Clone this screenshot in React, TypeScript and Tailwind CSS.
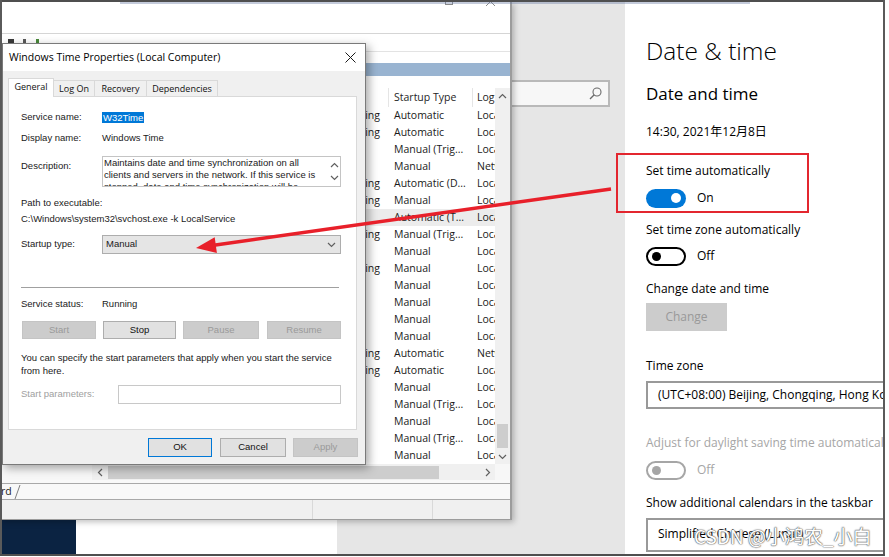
import React from "react";

const seg = "font-['Open_Sans','Noto_Sans_CJK_SC',sans-serif]";
const ms = "font-['Liberation_Sans',Arial,sans-serif]";

type Row = { st: string; type: string; log: string };

const rows: Row[] = [
  { st: "Running", type: "Automatic", log: "Local Service" },
  { st: "Running", type: "Automatic", log: "Local Service" },
  { st: "", type: "Manual (Trig...", log: "Local System" },
  { st: "", type: "Manual", log: "Network Service" },
  { st: "Running", type: "Automatic (D...", log: "Local System" },
  { st: "Running", type: "Manual", log: "Local System" },
  { st: "", type: "Automatic (T...", log: "Local System" },
  { st: "Running", type: "Manual (Trig...", log: "Local Service" },
  { st: "", type: "Manual", log: "Local System" },
  { st: "Running", type: "Manual", log: "Local System" },
  { st: "", type: "Manual", log: "Local System" },
  { st: "", type: "Manual", log: "Local System" },
  { st: "", type: "Manual", log: "Local System" },
  { st: "", type: "Manual", log: "Local System" },
  { st: "Running", type: "Automatic", log: "Network Service" },
  { st: "Running", type: "Automatic", log: "Local System" },
  { st: "", type: "Manual", log: "Local System" },
  { st: "", type: "Manual (Trig...", log: "Local System" },
  { st: "", type: "Manual", log: "Local System" },
  { st: "", type: "Manual (Trig...", log: "Local System" },
  { st: "", type: "Manual", log: "Local System" },
];

function Chev({ dir, color = "#606060" }: { dir: "up" | "down" | "left" | "right"; color?: string }) {
  const pts = {
    up: "1,6 4.5,2.5 8,6",
    down: "1,3 4.5,6.5 8,3",
    left: "6,1 2.5,4.5 6,8",
    right: "3,1 6.5,4.5 3,8",
  }[dir];
  return (
    <svg width="9" height="9" viewBox="0 0 9 9">
      <polyline points={pts} fill="none" stroke={color} strokeWidth="1.2" />
    </svg>
  );
}

function ServicesWindow() {
  return (
    <div className={`absolute left-0 top-[2px] w-[512px] h-[518px] bg-white border-r-2 border-b border-[#9c9c9c] shadow-[2px_2px_6px_rgba(0,0,0,0.25)] flex flex-col ${seg}`}>
      <div className="h-[32px] shrink-0 border-b border-[#d5d5d5] relative">
        <div className="absolute left-[445px] top-[-5px] w-[8px] h-[8px] border border-[#8a8a8a]" />
        <svg className="absolute left-[486px] top-[-5px]" width="9" height="9" viewBox="0 0 9 9">
          <path d="M0 0L9 9M9 0L0 9" stroke="#8a8a8a" strokeWidth="1" />
        </svg>
      </div>
      <div className="h-[18px] shrink-0 flex items-start gap-[6px] pl-[8px] pt-[5px] border-b border-[#e3e3e3]">
        <div className="w-[6px] h-[6px] bg-[#3a3a3a]" />
        <div className="w-[3px] h-[6px] bg-[#5a5a5a] ml-[3px]" />
        <div className="w-[3px] h-[6px] bg-[#4a8a3a] ml-[4px]" />
      </div>
      <div className="flex-1 flex flex-col pt-[11px]">
        <div className="h-[13px] bg-[#99b4d1]" />
        <div className="h-[12px]" />
        <div className="h-[376px] flex">
          <div className="w-[495px] flex flex-col">
            <div className="h-[19px] flex items-center text-[10.5px] text-[#1e1e1e] whitespace-nowrap">
              <div className="flex-1" />
              <div className="w-[84px] h-full flex items-center pl-[5px] border-l border-[#e5e5e5]">Startup Type</div>
              <div className="w-[23px] h-full flex items-center pl-[4px] border-l border-[#e5e5e5] overflow-hidden">Log On As</div>
            </div>
            {rows.map((r, i) => (
              <div
                key={i}
                className={`h-[17px] flex items-center text-[10.5px] text-[#1a1a1a] whitespace-nowrap ${i === 6 ? "bg-[#ececec]" : ""}`}
              >
                <div className="flex-1 text-right pr-[8px]">{r.st}</div>
                <div className="w-[84px] pl-[6px] overflow-hidden">{r.type}</div>
                <div className="w-[23px] pl-[5px] overflow-hidden">{r.log}</div>
              </div>
            ))}
          </div>
          <div className="w-[15px] bg-[#f0f0f0] flex flex-col">
            <div className="h-[17px] flex items-center justify-center">
              <Chev dir="up" />
            </div>
            <div className="flex-1">
              <div className="mt-[319px] mx-[2px] h-[24px] bg-[#cdcdcd]" />
            </div>
            <div className="h-[16px] flex items-center justify-center">
              <Chev dir="down" />
            </div>
          </div>
        </div>
        <div className="h-[16px] flex">
          <div className="w-[92px] bg-[#f7f7f7]" />
          <div className="flex-1 bg-[#f0f0f0] flex items-center">
            <div className="w-[16px] flex justify-center">
              <Chev dir="left" />
            </div>
            <div className="w-[331px] h-[13px] bg-[#cdcdcd]" />
            <div className="flex-1" />
            <div className="w-[15px] flex justify-center">
              <Chev dir="right" />
            </div>
          </div>
          <div className="w-[15px] bg-[#f7f7f7]" />
        </div>
      </div>
      <div className="h-[20px] shrink-0 bg-[#f8f8f8] pt-[3px]">
        <div className="h-[17px] border-t border-b border-[#a8a8a8] flex items-center text-[10.5px] text-[#1a1a1a]">
          <span className="ml-[1px]">rd</span>
          <svg width="8" height="16" viewBox="0 0 8 16" className="ml-[2px]">
            <path d="M1 15L6 1" stroke="#808080" strokeWidth="1" />
          </svg>
        </div>
      </div>
      <div className="h-[19px] shrink-0 bg-[#f0f0f0] flex">
        <div className="flex-1 border-r border-[#d9d9d9]" />
        <div className="w-[120px] border-r border-[#d9d9d9]" />
        <div className="w-[77px]" />
      </div>
    </div>
  );
}

function WinBtn({
  label,
  w,
  disabled,
  primary,
  className = "",
}: {
  label: string;
  w: number;
  disabled?: boolean;
  primary?: boolean;
  className?: string;
}) {
  const base = disabled
    ? "bg-[#cccccc] border-[#c4c4c4] text-[#9a9a9a]"
    : primary
    ? "bg-[#e1e1e1] border-[#0078d7] text-[#111]"
    : "bg-[#e1e1e1] border-[#adadad] text-[#111]";
  return (
    <div
      style={{ width: w }}
      className={`h-full border flex items-center justify-center text-[9.5px] ${base} ${className}`}
    >
      {label}
    </div>
  );
}

function Dialog() {
  return (
    <div className="absolute left-[2px] top-[43px] w-[364px] h-[422px] bg-[#f0f0f0] border border-[#7a7a7a] shadow-[3px_3px_9px_rgba(0,0,0,0.35)] flex flex-col">
      <div className={`h-[27px] shrink-0 bg-white flex items-center justify-between pl-[6px] pr-[9px] text-[10.5px] text-black ${seg}`}>
        <span>Windows Time Properties (Local Computer)</span>
        <svg width="11" height="11" viewBox="0 0 11 11">
          <path d="M0.5 0.5L10.5 10.5M10.5 0.5L0.5 10.5" stroke="#1a1a1a" strokeWidth="1" />
        </svg>
      </div>
      <div className={`mt-[7px] h-[18px] shrink-0 flex items-end pl-[5px] text-[9px] text-[#111] ${seg}`}>
        <div className="relative z-10 w-[46px] h-[19px] -mb-px bg-white border border-b-0 border-[#d9d9d9] flex items-center justify-center pb-[2px]">
          General
        </div>
        <div className="w-[41px] h-[16px] border border-l-0 border-b-0 border-[#d9d9d9] flex items-center justify-center">Log On</div>
        <div className="w-[52px] h-[16px] border border-l-0 border-b-0 border-[#d9d9d9] flex items-center justify-center">Recovery</div>
        <div className="w-[71px] h-[16px] border border-l-0 border-b-0 border-[#d9d9d9] flex items-center justify-center">Dependencies</div>
      </div>
      <div className={`ml-[5px] w-[349px] h-[334px] shrink-0 bg-white border border-[#d9d9d9] pl-[12px] text-[9.5px] text-[#1a1a1a] ${ms}`}>
        <div className="mt-[13px] h-[14px] flex items-center">
          <div className="w-[81px]">Service name:</div>
          <span className="bg-[#0078d7] text-white leading-[11px] px-px">W32Time</span>
        </div>
        <div className="mt-[7px] h-[14px] flex items-center">
          <div className="w-[81px]">Display name:</div>
          <span>Windows Time</span>
        </div>
        <div className="mt-[11px] h-[31px] flex">
          <div className="w-[81px] pt-[3px] leading-[14px]">Description:</div>
          <div className="w-[239px] h-full border border-[#c4c4c4] flex overflow-hidden">
            <div className="flex-1 pl-[1px] leading-[12px] whitespace-nowrap">
              <div>Maintains date and time synchronization on all</div>
              <div>clients and servers in the network. If this service is</div>
              <div>stopped, date and time synchronization will be</div>
            </div>
            <div className="w-[12px] flex flex-col items-center pt-[4px] gap-[3px]">
              <Chev dir="up" />
              <Chev dir="down" />
            </div>
          </div>
        </div>
        <div className="mt-[9px] h-[14px] flex items-center">Path to executable:</div>
        <div className="mt-[2px] h-[14px] flex items-center">C:\Windows\system32\svchost.exe -k LocalService</div>
        <div className="mt-[9px] h-[19px] flex items-center">
          <div className="w-[81px]">Startup type:</div>
          <div className="w-[239px] h-full bg-[#e5e5e5] border border-[#adadad] flex items-center justify-between pl-[3px] pr-[4px]">
            <span>Manual</span>
            <Chev dir="down" />
          </div>
        </div>
        <div className="mt-[33px] h-px w-[318px] bg-[#a0a0a0]" />
        <div className="mt-[9px] h-[14px] flex items-center">
          <div className="w-[81px]">Service status:</div>
          <span>Running</span>
        </div>
        <div className="mt-[10px] h-[18px] flex">
          <WinBtn label="Start" w={74} disabled className="ml-px" />
          <WinBtn label="Stop" w={73} className="ml-[7px]" />
          <WinBtn label="Pause" w={76} disabled className="ml-[7px]" />
          <WinBtn label="Resume" w={74} disabled className="ml-[8px]" />
        </div>
        <div className="mt-[12px] w-[318px] leading-[13px]">
          You can specify the start parameters that apply when you start the service from here.
        </div>
        <div className="mt-[8px] h-[19px] flex items-center">
          <div className="w-[97px] text-[#a0a0a0]">Start parameters:</div>
          <div className="w-[223px] h-full border border-[#c8c8c8] bg-white" />
        </div>
      </div>
      <div className={`mt-[8px] h-[19px] shrink-0 flex pl-[145px] ${ms}`}>
        <WinBtn label="OK" w={64} primary />
        <WinBtn label="Cancel" w={66} className="ml-[8px]" />
        <WinBtn label="Apply" w={65} disabled className="ml-[7px]" />
      </div>
    </div>
  );
}

function Toggle({ on, disabled }: { on?: boolean; disabled?: boolean }) {
  if (on) {
    return (
      <div className="w-[40px] h-[19px] rounded-full bg-[#0078d7] flex items-center justify-end pr-[5px]">
        <div className="w-[10px] h-[10px] rounded-full bg-white" />
      </div>
    );
  }
  return (
    <div
      className={`w-[40px] h-[19px] rounded-full border-2 flex items-center pl-[4px] ${
        disabled ? "border-[#a6a6a6]" : "border-black"
      }`}
    >
      <div className={`w-[9px] h-[9px] rounded-full ${disabled ? "bg-[#a6a6a6]" : "bg-black"}`} />
    </div>
  );
}

function Settings() {
  return (
    <div className={`absolute left-[625px] top-[2px] w-[258px] h-[552px] bg-white overflow-hidden pl-[21px] text-[12px] text-black whitespace-nowrap ${seg}`}>
      <div className="mt-[33px] h-[32px] flex items-center text-[24.5px] font-light">Date &amp; time</div>
      <div className="mt-[15px] h-[24px] flex items-center text-[17px]">Date and time</div>
      <div className="mt-[17px] h-[18px] flex items-center">14:30, 2021年12月8日</div>
      <div className="mt-[21px] h-[18px] flex items-center">Set time automatically</div>
      <div className="mt-[8px] h-[20px] flex items-center">
        <Toggle on />
        <span className="ml-[11px]">On</span>
      </div>
      <div className="mt-[13px] h-[18px] flex items-center">Set time zone automatically</div>
      <div className="mt-[7px] h-[20px] flex items-center">
        <Toggle />
        <span className="ml-[11px]">Off</span>
      </div>
      <div className="mt-[14px] h-[18px] flex items-center">Change date and time</div>
      <div className="mt-[5px] w-[81px] h-[28px] bg-[#cccccc] text-[#999999] flex items-center justify-center">Change</div>
      <div className="mt-[26px] h-[18px] flex items-center">Time zone</div>
      <div className="mt-[6px] w-[260px] h-[28px] border-2 border-[#999999] flex items-center pl-[10px]">
        (UTC+08:00) Beijing, Chongqing, Hong Kong, Urumqi
      </div>
      <div className="mt-[25px] h-[18px] flex items-center text-[#a6a6a6]">Adjust for daylight saving time automatically</div>
      <div className="mt-[8px] h-[20px] flex items-center">
        <Toggle disabled />
        <span className="ml-[11px] text-[#a6a6a6]">Off</span>
      </div>
      <div className="mt-[14px] h-[18px] flex items-center">Show additional calendars in the taskbar</div>
      <div className="mt-[6px] w-[260px] h-[34px] border-2 border-[#999999] flex items-start pt-[5px] pl-[10px]">
        Simplified Chinese (Lunar)
      </div>
    </div>
  );
}

export default function App() {
  return (
    <div className="relative w-[889px] h-[557px] overflow-hidden bg-[#e6e6e6]">
      {/* things behind the windows */}
      <div className="absolute left-[480px] top-[80px] w-[130px] h-[27px] bg-[#f7f7f7] border-2 border-[#b9b9b9] flex items-center justify-end pr-[6px]">
        <svg width="13" height="13" viewBox="0 0 13 13">
          <circle cx="8" cy="5" r="4" fill="none" stroke="#6a6a6a" strokeWidth="1.1" />
          <path d="M5.2 7.8L1 12" stroke="#6a6a6a" strokeWidth="1.3" />
        </svg>
      </div>
      <div className="absolute left-0 top-[520px] w-[76px] h-[37px] bg-[#0b2342]" />
      <div className="absolute left-[76px] top-[520px] w-[261px] h-[37px] bg-white" />

      <ServicesWindow />
      <Dialog />
      <Settings />

      {/* annotations */}
      <div className="absolute left-[616px] top-[153px] w-[193px] h-[60px] border-2 border-[#e3262f]" />
      <svg className="absolute left-0 top-0 pointer-events-none" width="889" height="557" viewBox="0 0 889 557">
        <line x1="611" y1="189" x2="212" y2="245.5" stroke="#e8202a" strokeWidth="3.5" />
        <polygon points="196,248 214.7,237.3 216.9,253.1" fill="#e8202a" />
      </svg>
      <div className="absolute left-[694px] top-[524px] text-[19px] leading-[24px] text-white font-['Noto_Sans_CJK_SC',sans-serif] [text-shadow:0_0_1px_#555,0_0_1px_#555,0_0_2px_#888] whitespace-nowrap">
        CSDN @小鸿农_小白
      </div>

      {/* screen frame */}
      <div className="absolute left-[120px] top-[1px] w-[630px] h-[3px] bg-[#6c7ea6] opacity-40" />
      <div className="absolute left-0 top-0 w-full h-[2px] bg-[#4f4f4f]" />
      <div className="absolute left-0 top-0 w-[2px] h-full bg-[#5a5a5a]" />
      <div className="absolute left-[883px] top-0 w-[2px] h-full bg-[#5a5a5a]" />
      <div className="absolute left-[885px] top-0 w-[4px] h-full bg-white" />
      <div className="absolute left-0 top-[554px] w-[885px] h-[2px] bg-[#4f4f4f]" />
      <div className="absolute left-0 top-[556px] w-[889px] h-[1px] bg-white" />
    </div>
  );
}
